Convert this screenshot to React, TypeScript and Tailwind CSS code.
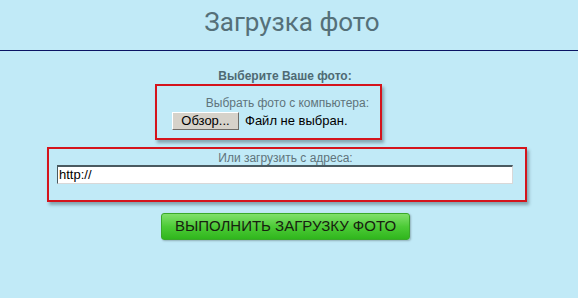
export default function App() {
  return (
    <div className="w-[578px] h-[298px] bg-[#c1eaf7] overflow-hidden" style={{ fontFamily: '"Liberation Sans", Arial, sans-serif' }}>
      {/* Заголовок */}
      <div className="h-[50px] flex items-center justify-center border-b border-[#0a1464] box-content">
        <h1 className="text-[26px] leading-none text-[#557079] pb-[7px] pl-[6px]" style={{ fontFamily: 'Roboto, "Liberation Sans", sans-serif' }}>
          Загрузка фото
        </h1>
      </div>

      <p className="mt-[18px] pr-[8px] text-center text-[12px] leading-[14px] font-bold text-[#4f6a73]">
        Выберите Ваше фото:
      </p>

      {/* С компьютера */}
      <div className="mt-[1px] ml-[155px] w-[227px] h-[56px] border-2 border-[#d4141c] shadow-[2px_3px_3px_rgba(60,80,90,0.45)] flex flex-col items-end pt-[10px] pr-[11px]">
        <span className="text-[12px] leading-[14px] text-[#5f747b]">Выбрать фото с компьютера:</span>
        <div className="mt-[1px] self-start ml-[15px] flex items-center gap-[6px]">
          <span className="w-[67px] h-[18px] flex items-center justify-center bg-[#d6d2ca] border border-t-white border-l-white border-r-[#6f6c68] border-b-[#6f6c68] text-[13px] text-black">
            Обзор...
          </span>
          <span className="text-[13px] text-black">Файл не выбран.</span>
        </div>
      </div>

      {/* По адресу */}
      <div className="mt-[7px] ml-[47px] w-[480px] h-[55px] border-2 border-[#d4141c] shadow-[2px_3px_3px_rgba(60,80,90,0.45)] flex flex-col items-center pt-[2px]">
        <span className="text-[12px] leading-[14px] text-[#5f747b] ml-[-3px]">Или загрузить с адреса:</span>
        <div className="mt-[0px] self-start ml-[8px] w-[456px] h-[19px] bg-white border border-t-[#4a5a60] border-l-[#4a5a60] border-t-2 border-r-[#d8d8d8] border-b-[#d8d8d8] flex items-center pl-[1px] text-[13px] text-black">
          http://
        </div>
      </div>

      {/* Кнопка */}
      <div className="mt-[11px] ml-[161px]">
        <button className="w-[249px] h-[27px] rounded-[3px] border border-[#3aa82a] bg-gradient-to-b from-[#7fe06a] via-[#4ccb36] to-[#2fb61c] text-[15px] text-[#17220f] shadow-[1px_1px_2px_rgba(0,0,0,0.25)]">
          ВЫПОЛНИТЬ ЗАГРУЗКУ ФОТО
        </button>
      </div>
    </div>
  )
}
